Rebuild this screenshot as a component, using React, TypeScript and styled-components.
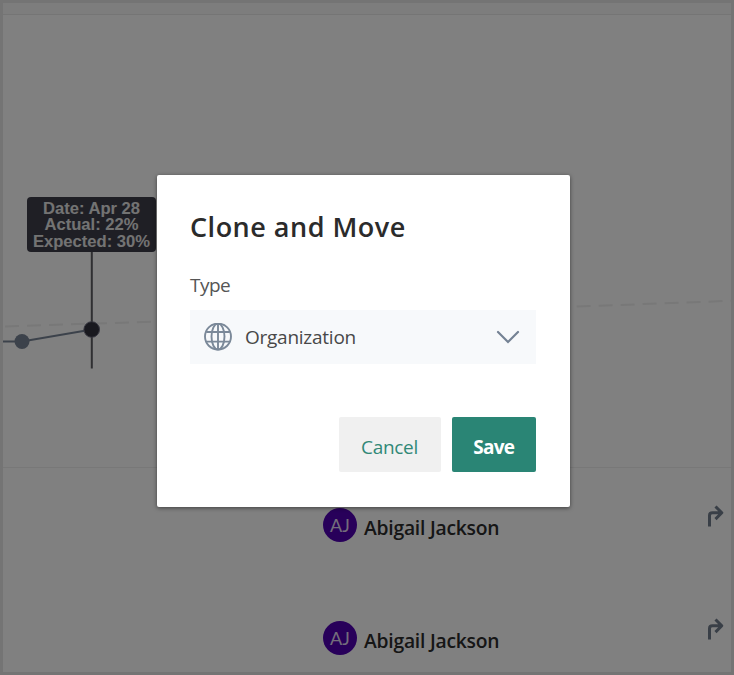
import React from 'react';
import styled, { createGlobalStyle } from 'styled-components';

const GlobalStyle = createGlobalStyle`
  *, *::before, *::after { box-sizing: border-box; }
  body { margin: 0; background: #747474; font-family: 'Open Sans', 'Noto Sans', sans-serif; }
`;

const Frame = styled.div`
  position: relative;
  width: 734px;
  height: 675px;
  border: 3px solid #747474;
  overflow: hidden;
  background: #fff;
`;

const TopBar = styled.div`
  height: 12px;
  background: #fafafa;
  border-bottom: 1px solid #e9e9e9;
`;

const ChartPanel = styled.section`
  position: relative;
  height: 453px;
  border-bottom: 1px solid #f0f0f0;
`;

const ChartSvg = styled.svg`
  display: block;
`;

const ChartTooltip = styled.div`
  position: absolute;
  left: 24px;
  top: 182px;
  width: 129px;
  height: 55px;
  padding-top: 4px;
  border-radius: 4px;
  background: #3e3e4b;
  color: #e6e6e6;
  font: bold 16.6px/16.4px 'Liberation Sans', Arial, sans-serif;
  text-align: center;
  white-space: nowrap;
`;

const PersonRow = styled.div`
  display: flex;
  align-items: center;
  height: 113px;
  padding: 1px 7px 0 320px;
`;

const Avatar = styled.div`
  display: grid;
  place-items: center;
  width: 34px;
  height: 34px;
  margin-right: 7px;
  border-radius: 50%;
  background: #5000b4;
  color: #e6dcf5;
  font-family: Lato, sans-serif;
  font-size: 18px;
  line-height: 34px;
`;

const PersonName = styled.span`
  flex: 1;
  padding-top: 5px;
  color: #2c2c2c;
  font-size: 19.3px;
  font-weight: 600;
  letter-spacing: -0.23px;
`;

const MoveIcon = styled.svg`
  margin-bottom: 18px;
`;

const Overlay = styled.div`
  position: absolute;
  inset: 0;
  background: rgba(0, 0, 0, 0.498);
  padding: 172px 0 0 154px;
`;

const Dialog = styled.div`
  width: 413px;
  height: 332px;
  padding: 33px 34px 35px 33px;
  display: flex;
  flex-direction: column;
  border-radius: 2px;
  background: #fff;
  box-shadow: 0 1px 4px rgba(0, 0, 0, 0.5);
`;

const Title = styled.h2`
  margin: 0;
  color: #2b2b2b;
  font-size: 27px;
  font-weight: 600;
  line-height: 38px;
  letter-spacing: 0.5px;
`;

const Label = styled.label`
  margin-top: 25px;
  color: #555;
  font-size: 19px;
  line-height: 28px;
  letter-spacing: -0.5px;
`;

const Select = styled.div`
  display: flex;
  align-items: center;
  height: 54px;
  margin-top: 11px;
  padding: 0 16px 0 14px;
  background: #f7f9fb;
  color: #484848;
`;

const SelectValue = styled.span`
  flex: 1;
  margin-left: 13px;
  font-size: 19px;
  letter-spacing: -0.25px;
`;

const Actions = styled.div`
  display: flex;
  justify-content: flex-end;
  gap: 11px;
  margin-top: auto;
`;

const Button = styled.button<{ $primary?: boolean }>`
  width: ${(p) => (p.$primary ? 84.5 : 102)}px;
  height: 55px;
  padding: 5px 0 0;
  border: 0;
  border-radius: 2px;
  background: ${(p) => (p.$primary ? '#2a8575' : '#f0f0f0')};
  color: ${(p) => (p.$primary ? '#fff' : '#318877')};
  font-family: inherit;
  font-size: 19px;
  font-weight: ${(p) => (p.$primary ? 700 : 400)};
  letter-spacing: ${(p) => (p.$primary ? -0.8 : -0.3)}px;
`;

const Chart = () => (
  <ChartSvg width="728" height="452" viewBox="3 15 728 452" fill="none">
    <path d="M5 326.5L157 321.5L570 306.8L731 300.8" stroke="#efefef" strokeWidth="2" strokeDasharray="14 8" />
    <path d="M3 341.5L22 341.5L92 329.5" stroke="#788496" strokeWidth="2" />
    <path d="M91.8 250V368.5" stroke="#606064" strokeWidth="2" />
    <circle cx="22" cy="341.5" r="7.5" fill="#788496" />
    <circle cx="91.7" cy="329.5" r="7.8" fill="#32323f" stroke="#707083" strokeWidth="1" />
  </ChartSvg>
);

const Globe = () => (
  <svg width="28" height="28" viewBox="0 0 28 28" fill="none" stroke="#7b8999" strokeWidth="1.9">
    <circle cx="14" cy="13.6" r="13" />
    <ellipse cx="14" cy="13.6" rx="6.5" ry="13" />
    <path d="M14 0.6V26.6M2.2 9H25.8M2.2 18.6H25.8" />
  </svg>
);

const Chevron = () => (
  <svg width="24" height="14" viewBox="0 0 24 14" fill="none" stroke="#748294" strokeWidth="2.2" strokeLinecap="round">
    <path d="M2 2L12 12L22 2" />
  </svg>
);

const people = [
  { id: 1, name: 'Abigail Jackson', initials: 'AJ' },
  { id: 2, name: 'Abigail Jackson', initials: 'AJ' },
];

export default function App() {
  return (
    <>
      <GlobalStyle />
      <Frame>
        <TopBar />
        <ChartPanel>
          <Chart />
          <ChartTooltip>
            Date: Apr 28<br />Actual: 22%<br />Expected: 30%
          </ChartTooltip>
        </ChartPanel>
        {people.map((person) => (
          <PersonRow key={person.id}>
            <Avatar>{person.initials}</Avatar>
            <PersonName>{person.name}</PersonName>
            <MoveIcon width="18" height="24" viewBox="0 0 18 24" fill="none" stroke="#737e8e" strokeWidth="3" strokeLinejoin="round">
              <path d="M3.5 22.5V11.5Q3.5 8.8 6.5 8.8H15.5M9.5 2.5L15.8 8.8L9.5 15.1" />
            </MoveIcon>
          </PersonRow>
        ))}
        <Overlay>
          <Dialog role="dialog" aria-labelledby="dialog-title">
            <Title id="dialog-title">Clone and Move</Title>
            <Label>Type</Label>
            <Select>
              <Globe />
              <SelectValue>Organization</SelectValue>
              <Chevron />
            </Select>
            <Actions>
              <Button>Cancel</Button>
              <Button $primary>Save</Button>
            </Actions>
          </Dialog>
        </Overlay>
      </Frame>
    </>
  );
}
